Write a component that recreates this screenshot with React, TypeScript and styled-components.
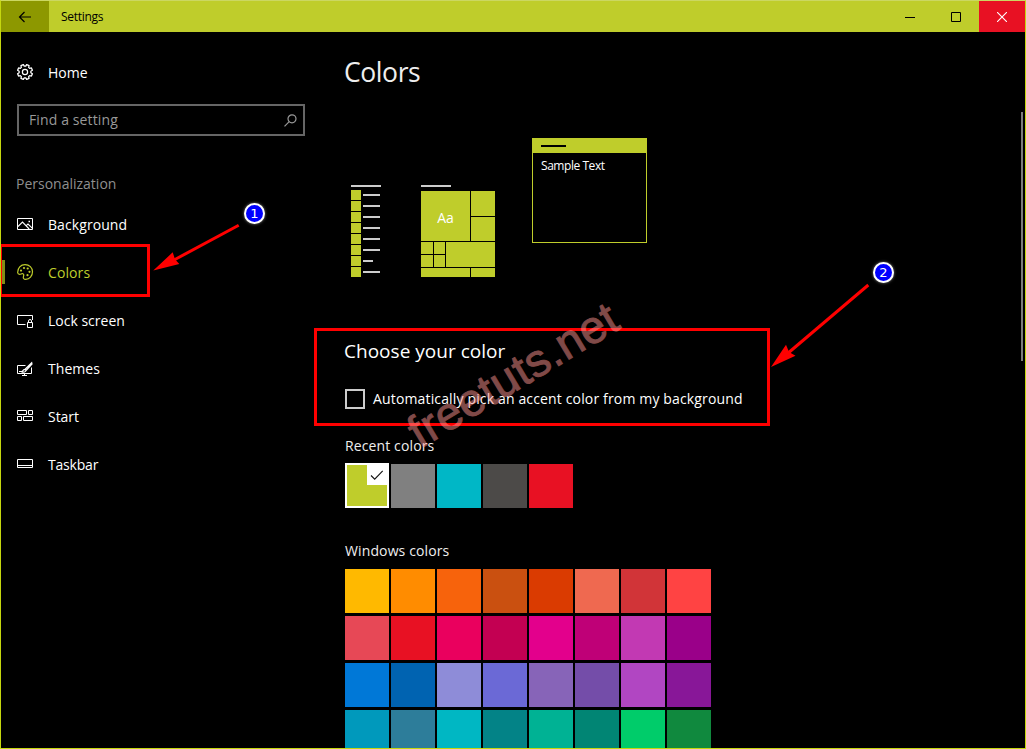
import React from "react";
import styled, { createGlobalStyle } from "styled-components";

const ACCENT = "#bfcd2b";

const GlobalStyle = createGlobalStyle`
  * { box-sizing: border-box; }
  body { margin: 0; background: #000; overflow: hidden; }
`;

const Window = styled.div`
  position: relative;
  width: 1026px;
  height: 749px;
  display: flex;
  flex-direction: column;
  background: #000;
  border: 1px solid #c5d70f;
  border-top-color: #cbd762;
  color: #fff;
  font-family: "Open Sans", "Noto Sans", sans-serif;
  font-size: 14px;
  overflow: hidden;
`;

const TitleBar = styled.header`
  flex: none;
  display: flex;
  height: 31px;
  background: ${ACCENT};
  color: #000;
`;

const TitleButton = styled.button<{ $width: number; $bg?: string }>`
  width: ${(p) => p.$width}px;
  height: 31px;
  padding: 0;
  border: 0;
  display: flex;
  align-items: center;
  justify-content: center;
  background: ${(p) => p.$bg ?? "transparent"};
`;

const Title = styled.div`
  flex: 1;
  padding-left: 12px;
  font-size: 12px;
  letter-spacing: -0.3px;
  line-height: 31px;
`;

const Body = styled.div`
  flex: 1;
  min-height: 0;
  display: flex;
`;

const Sidebar = styled.nav`
  width: 343px;
  flex: none;
  padding-top: 16px;
`;

const NavItem = styled.a<{ $active?: boolean }>`
  display: flex;
  align-items: center;
  height: 48px;
  padding-left: ${(p) => (p.$active ? 0 : 16)}px;
  color: ${(p) => (p.$active ? ACCENT : "#fff")};
  &::before {
    content: "";
    display: ${(p) => (p.$active ? "block" : "none")};
    width: 4px;
    height: 24px;
    margin-right: 12px;
    background: #838d17;
  }
  svg { flex: none; margin-right: 14px; }
`;

const Label = styled.span<{ $spacing?: number; $drop?: number }>`
  line-height: 20px;
  padding-top: ${(p) => p.$drop ?? 0}px;
  white-space: nowrap;
  letter-spacing: ${(p) => p.$spacing ?? 0}px;
`;

const SearchBox = styled.div`
  display: flex;
  align-items: center;
  justify-content: space-between;
  width: 288px;
  height: 32px;
  margin: 8px 0 0 16px;
  padding: 0 6px 0 10px;
  border: 2px solid #666;
  color: #999;
`;

const GroupTitle = styled.div`
  height: 64px;
  padding: 38px 0 0 15px;
  line-height: 20px;
  color: #8f8f8f;
`;

const Content = styled.main`
  flex: 1;
  min-width: 0;
  overflow: hidden;
`;

const PageTitle = styled.h1`
  margin: 20px 0 0;
  height: 40px;
  font-size: 26.5px;
  letter-spacing: -0.4px;
  line-height: 41px;
  font-weight: 400;
  color: #eee;
`;

const Previews = styled.div`
  display: flex;
  align-items: flex-end;
  height: 185px;
  padding-left: 7px;
`;

const AppList = styled.div`
  width: 30px;
  margin-right: 40px;
`;

const HeadLine = styled.div`
  width: 30px;
  height: 2px;
  background: #ccc;
`;

const AppRows = styled.div`
  display: grid;
  gap: 1px;
  margin-top: 3px;
`;

const AppRow = styled.div<{ $short?: boolean }>`
  display: flex;
  align-items: center;
  gap: 2px;
  height: 10px;
  &::before { content: ""; width: 10px; height: 10px; background: ${ACCENT}; }
  &::after { content: ""; width: ${(p) => (p.$short ? 10 : 17)}px; height: 2px; background: #ccc; }
`;

const TileGroup = styled.div`
  width: 74px;
  margin-right: 37px;
`;

const Tiles = styled.div`
  display: grid;
  grid-template-columns: 12px 11px 24px 24px;
  grid-template-rows: 25px 24px 12px 12px 9px;
  gap: 1px;
  margin-top: 4px;
`;

const Tile = styled.div<{ $area: string }>`
  grid-area: ${(p) => p.$area};
  display: flex;
  align-items: center;
  justify-content: center;
  background: ${ACCENT};
  padding-top: 2px;
`;

const SampleWindow = styled.div`
  align-self: flex-start;
  width: 115px;
  height: 105px;
  margin-top: 46px;
  border: 1px solid ${ACCENT};
`;

const SampleBar = styled.div`
  height: 14px;
  padding: 6px 0 0 8px;
  background: ${ACCENT};
  &::before { content: ""; display: block; width: 25px; height: 2px; background: #000; }
`;

const SampleText = styled.div`
  padding: 5px 0 0 8px;
  font-size: 12px;
  letter-spacing: -0.45px;
  line-height: 16px;
`;

const Heading = styled.h2`
  margin: 60px 0 0;
  height: 28px;
  font-size: 19px;
  letter-spacing: 0.02px;
  line-height: 28px;
  font-weight: 400;
`;

const CheckRow = styled.label`
  display: flex;
  align-items: center;
  gap: 8px;
  height: 20px;
  margin: 24px 0 0 1px;
`;

const CheckBox = styled.span`
  width: 20px;
  height: 20px;
  border: 2px solid #ccc;
`;

const SubHeading = styled.h3<{ $top: number; $bottom: number }>`
  margin: ${(p) => p.$top}px 0 ${(p) => p.$bottom}px 1px;
  font-size: 14px;
  letter-spacing: 0.12px;
  line-height: 20px;
  font-weight: 400;
  color: #eee;
`;

const Palette = styled.div`
  display: grid;
  grid-template-columns: repeat(8, 44px);
  gap: 3px 2px;
  margin-left: 1px;
`;

const Swatch = styled.div<{ $color: string; $selected?: boolean }>`
  display: flex;
  justify-content: flex-end;
  height: ${(p) => (p.$selected ? 45 : 44)}px;
  margin-top: ${(p) => (p.$selected ? -1 : 0)}px;
  background: ${(p) => p.$color};
  border: ${(p) => (p.$selected ? "2px solid #fff" : "0")};
`;

const SwatchCheck = styled.span`
  width: 20px;
  height: 20px;
  background: #fff;
`;

const Scrollbar = styled.div`
  flex: none;
  width: 2px;
  height: 249px;
  margin: 80px 2px 0 0;
  background: #7c7c7c;
`;

const Overlay = styled.svg`
  position: absolute;
  left: -1px;
  top: -1px;
`;

const Highlight = styled.div<{ $x: number; $y: number; $w: number; $h: number }>`
  position: absolute;
  left: ${(p) => p.$x - 1}px;
  top: ${(p) => p.$y - 1}px;
  width: ${(p) => p.$w}px;
  height: ${(p) => p.$h}px;
  border: 3px solid #f00;
`;

const Badge = styled.div<{ $x: number; $y: number }>`
  position: absolute;
  left: ${(p) => p.$x - 1}px;
  top: ${(p) => p.$y - 1}px;
  width: 21px;
  height: 21px;
  border: 2.5px solid #fff;
  border-radius: 50%;
  background: #00f;
  box-shadow: 0 0 3px rgba(255, 255, 255, 0.5);
  font: 13px/17px "DejaVu Sans", sans-serif;
  text-align: center;
`;

const Watermark = styled.div`
  position: absolute;
  left: 419px;
  top: 410px;
  font: 46px/45px "Liberation Sans", Arial, sans-serif;
  letter-spacing: 0.5px;
  color: #ff9490;
  -webkit-text-stroke: 0.9px #ff9490;
  opacity: 0.5;
  white-space: nowrap;
  transform-origin: 0 38px;
  transform: rotate(-31deg);
`;

const Icon = ({ children }: { children: React.ReactNode }) => (
  <svg width="17" height="16" viewBox="0 0 17 16" fill="none" stroke="currentColor">
    {children}
  </svg>
);

const gearPath = (() => {
  const pts: string[] = [];
  for (let i = 0; i < 8; i++) {
    const base = (i * Math.PI) / 4 + Math.PI / 8;
    [[-0.27, 5.9], [-0.17, 7.6], [0.17, 7.6], [0.27, 5.9]].forEach(([a, r]) => {
      pts.push(`${(8 + r * Math.cos(base + a)).toFixed(2)} ${(8 + r * Math.sin(base + a)).toFixed(2)}`);
    });
  }
  return `M${pts.join("L")}Z`;
})();

const GearIcon = () => (
  <Icon>
    <path d={gearPath} strokeWidth="1.3" strokeLinejoin="round" />
    <circle cx="8" cy="8" r="2.6" strokeWidth="1.2" />
  </Icon>
);

const PictureIcon = () => (
  <Icon>
    <path d="M.5 2.5h15v11H.5z" />
    <path d="M1 10.5 5.5 6l6.7 7M9 9.8l2-1.8 4.5 4.3" strokeWidth="1.1" />
    <path d="M11.5 5.5h1.5" strokeWidth="1.3" />
  </Icon>
);

const PaletteIcon = () => (
  <Icon>
    <path
      d="M.7 8.7C.5 4 3.8.6 8 .6c4.3 0 7.5 3.1 7.5 7.2 0 4.3-3 7.6-6.7 7.6-2.3 0-2.8-1.5-2.3-3 .4-1.2.4-2.2-.5-2.6C4.8 9.200 4 10.3 2.7 10.3 1.6 10.3.8 9.8.7 8.7Z"
      strokeWidth="1.2"
    />
    <g fill="currentColor" stroke="none">
      <circle cx="4" cy="6.6" r="1.1" />
      <circle cx="7" cy="4" r="1.1" />
      <circle cx="10.7" cy="4.5" r="1.1" />
      <circle cx="12.5" cy="7.8" r="1.1" />
      <circle cx="10.5" cy="11.2" r="1.1" />
    </g>
  </Icon>
);

const LockScreenIcon = () => (
  <Icon>
    <path d="M8.5 12.5H.5v-9h15v4.5" />
    <path d="M10.5 10.5h5v5h-5zM11.500 10.5V9a1.5 1.5 0 0 1 3 0v1.5" />
  </Icon>
);

const ThemesIcon = () => (
  <Icon>
    <path d="M8.5 5.5h-8v8h14v-6M7.5 13.5v2M5 15.500h5M2 11.500h4" />
    <path d="M14.700 2.700 8 9.300l1 1.200 6-6.500ZM8 9.300c-1.800 0-1.800 2-3.500 2.300 2 1 4.300.5 4.500-1.100" strokeWidth="1.2" />
  </Icon>
);

const StartIcon = () => (
  <Icon>
    <path d="M.5 2.5h9v4h-9zM11.5 2.5h4v4h-4zM.5 8.5h4v4h-4zM6.5 8.5h9v4h-9z" />
  </Icon>
);

const TaskbarIcon = () => (
  <Icon>
    <path d="M.5 3.5h15v8H.5zM.5 9.5h15" />
  </Icon>
);

const navItems = [
  { label: "Background", icon: <PictureIcon />, spacing: 0.08 },
  { label: "Colors", icon: <PaletteIcon />, active: true, spacing: 0.1 },
  { label: "Lock screen", icon: <LockScreenIcon />, spacing: 0 },
  { label: "Themes", icon: <ThemesIcon />, spacing: 0.05 },
  { label: "Start", icon: <StartIcon />, spacing: -0.05 },
  { label: "Taskbar", icon: <TaskbarIcon />, spacing: -0.2 },
];

const recentColors = [ACCENT, "#808080", "#00b7c6", "#4c4a48", "#e81123"];

const windowsColors = [
  "#ffb900", "#ff8c00", "#f7630c", "#ca5010", "#da3b01", "#ef6950", "#d13438", "#ff4343",
  "#e74856", "#e81123", "#ea005e", "#c30052", "#e3008c", "#bf0077", "#c239b3", "#9a0089",
  "#0078d7", "#0063b1", "#8e8cd8", "#6b69d6", "#8764b8", "#744da9", "#b146c2", "#881798",
  "#0099bc", "#2d7d9a", "#00b7c3", "#038387", "#00b294", "#018574", "#00cc6a", "#10893e",
];

const tileAreas = [
  "1 / 4 / 2 / 5",
  "2 / 4 / 3 / 5",
  "3 / 1 / 4 / 2",
  "3 / 2 / 4 / 3",
  "4 / 1 / 5 / 2",
  "4 / 2 / 5 / 3",
  "3 / 3 / 5 / 5",
  "5 / 1 / 6 / 4",
  "5 / 4 / 6 / 5",
];

export default function App() {
  return (
    <>
      <GlobalStyle />
      <Window>
        <TitleBar>
          <TitleButton $width={48} $bg="#8d9800" aria-label="Back">
            <svg width="14" height="12" viewBox="0 0 14 12" fill="none" stroke="#000" strokeWidth="1.2">
              <path d="M13 6H1.5M6.5 1l-5 5 5 5" />
            </svg>
          </TitleButton>
          <Title>Settings</Title>
          <TitleButton $width={46} aria-label="Minimize">
            <svg width="10" height="10" stroke="#000"><path d="M0 5.5h10" /></svg>
          </TitleButton>
          <TitleButton $width={46} aria-label="Maximize">
            <svg width="10" height="10" stroke="#000" fill="none"><path d="M.5.5h9v9h-9z" /></svg>
          </TitleButton>
          <TitleButton $width={46} $bg="#e81123" aria-label="Close">
            <svg width="10" height="10" stroke="#fff" strokeWidth="1.1"><path d="M0 0 10 10M10 0 0 10" /></svg>
          </TitleButton>
        </TitleBar>
        <Body>
          <Sidebar>
            <NavItem>
              <GearIcon />
              <Label $drop={2}>Home</Label>
            </NavItem>
            <SearchBox>
              <Label $spacing={0.12}>Find a setting</Label>
              <svg width="13" height="13" viewBox="0 0 13 13" fill="none" stroke="#999" strokeWidth="1.2">
                <circle cx="8" cy="4.8" r="4" />
                <path d="M5.2 7.7.5 12.4" />
              </svg>
            </SearchBox>
            <GroupTitle>Personalization</GroupTitle>
            {navItems.map((item) => (
              <NavItem key={item.label} $active={item.active}>
                {item.icon}
                <Label $drop={2} $spacing={item.spacing}>{item.label}</Label>
              </NavItem>
            ))}
          </Sidebar>
          <Content>
            <PageTitle>Colors</PageTitle>
            <Previews>
              <AppList>
                <HeadLine />
                <AppRows>
                  {[0, 1, 2, 3, 4, 5, 6, 7].map((i) => (
                    <AppRow key={i} $short={i === 6} />
                  ))}
                </AppRows>
              </AppList>
              <TileGroup>
                <HeadLine />
                <Tiles>
                  <Tile $area="1 / 1 / 3 / 4">Aa</Tile>
                  {tileAreas.map((a) => (
                    <Tile key={a} $area={a} />
                  ))}
                </Tiles>
              </TileGroup>
              <SampleWindow>
                <SampleBar />
                <SampleText>Sample Text</SampleText>
              </SampleWindow>
            </Previews>
            <Heading>Choose your color</Heading>
            <CheckRow>
              <CheckBox />
              <Label $spacing={0.15}>Automatically pick an accent color from my background</Label>
            </CheckRow>
            <SubHeading $top={27} $bottom={8}>Recent colors</SubHeading>
            <Palette>
              {recentColors.map((c, i) => (
                <Swatch key={c} $color={c} $selected={i === 0}>
                  {i === 0 && (
                    <SwatchCheck>
                      <svg width="20" height="20" fill="none" stroke="#111" strokeWidth="1.1">
                        <path d="M4 10.5 7.7 14.2 15.7 5.8" />
                      </svg>
                    </SwatchCheck>
                  )}
                </Swatch>
              ))}
            </Palette>
            <SubHeading $top={33} $bottom={8}>Windows colors</SubHeading>
            <Palette>
              {windowsColors.map((c) => (
                <Swatch key={c} $color={c} />
              ))}
            </Palette>
          </Content>
          <Scrollbar />
        </Body>
        <Highlight $x={-1} $y={244} $w={151} $h={53} />
        <Highlight $x={314} $y={328} $w={456} $h={98} />
        <Overlay width="1026" height="749" viewBox="0 0 1026 749" fill="#f00">
          <path d="M238.7 225.3 174 260M868.3 285 787 354" stroke="#f00" strokeWidth="3" />
          <path d="M153.3 270.6 172.7 252.3 175 259.3 179.3 264Z" />
          <path d="M771 367 786 344.7 789 352 795.5 355.7Z" />
        </Overlay>
        <Badge $x={244} $y={203}>1</Badge>
        <Badge $x={873} $y={262}>2</Badge>
        <Watermark>freetuts.net</Watermark>
      </Window>
    </>
  );
}
